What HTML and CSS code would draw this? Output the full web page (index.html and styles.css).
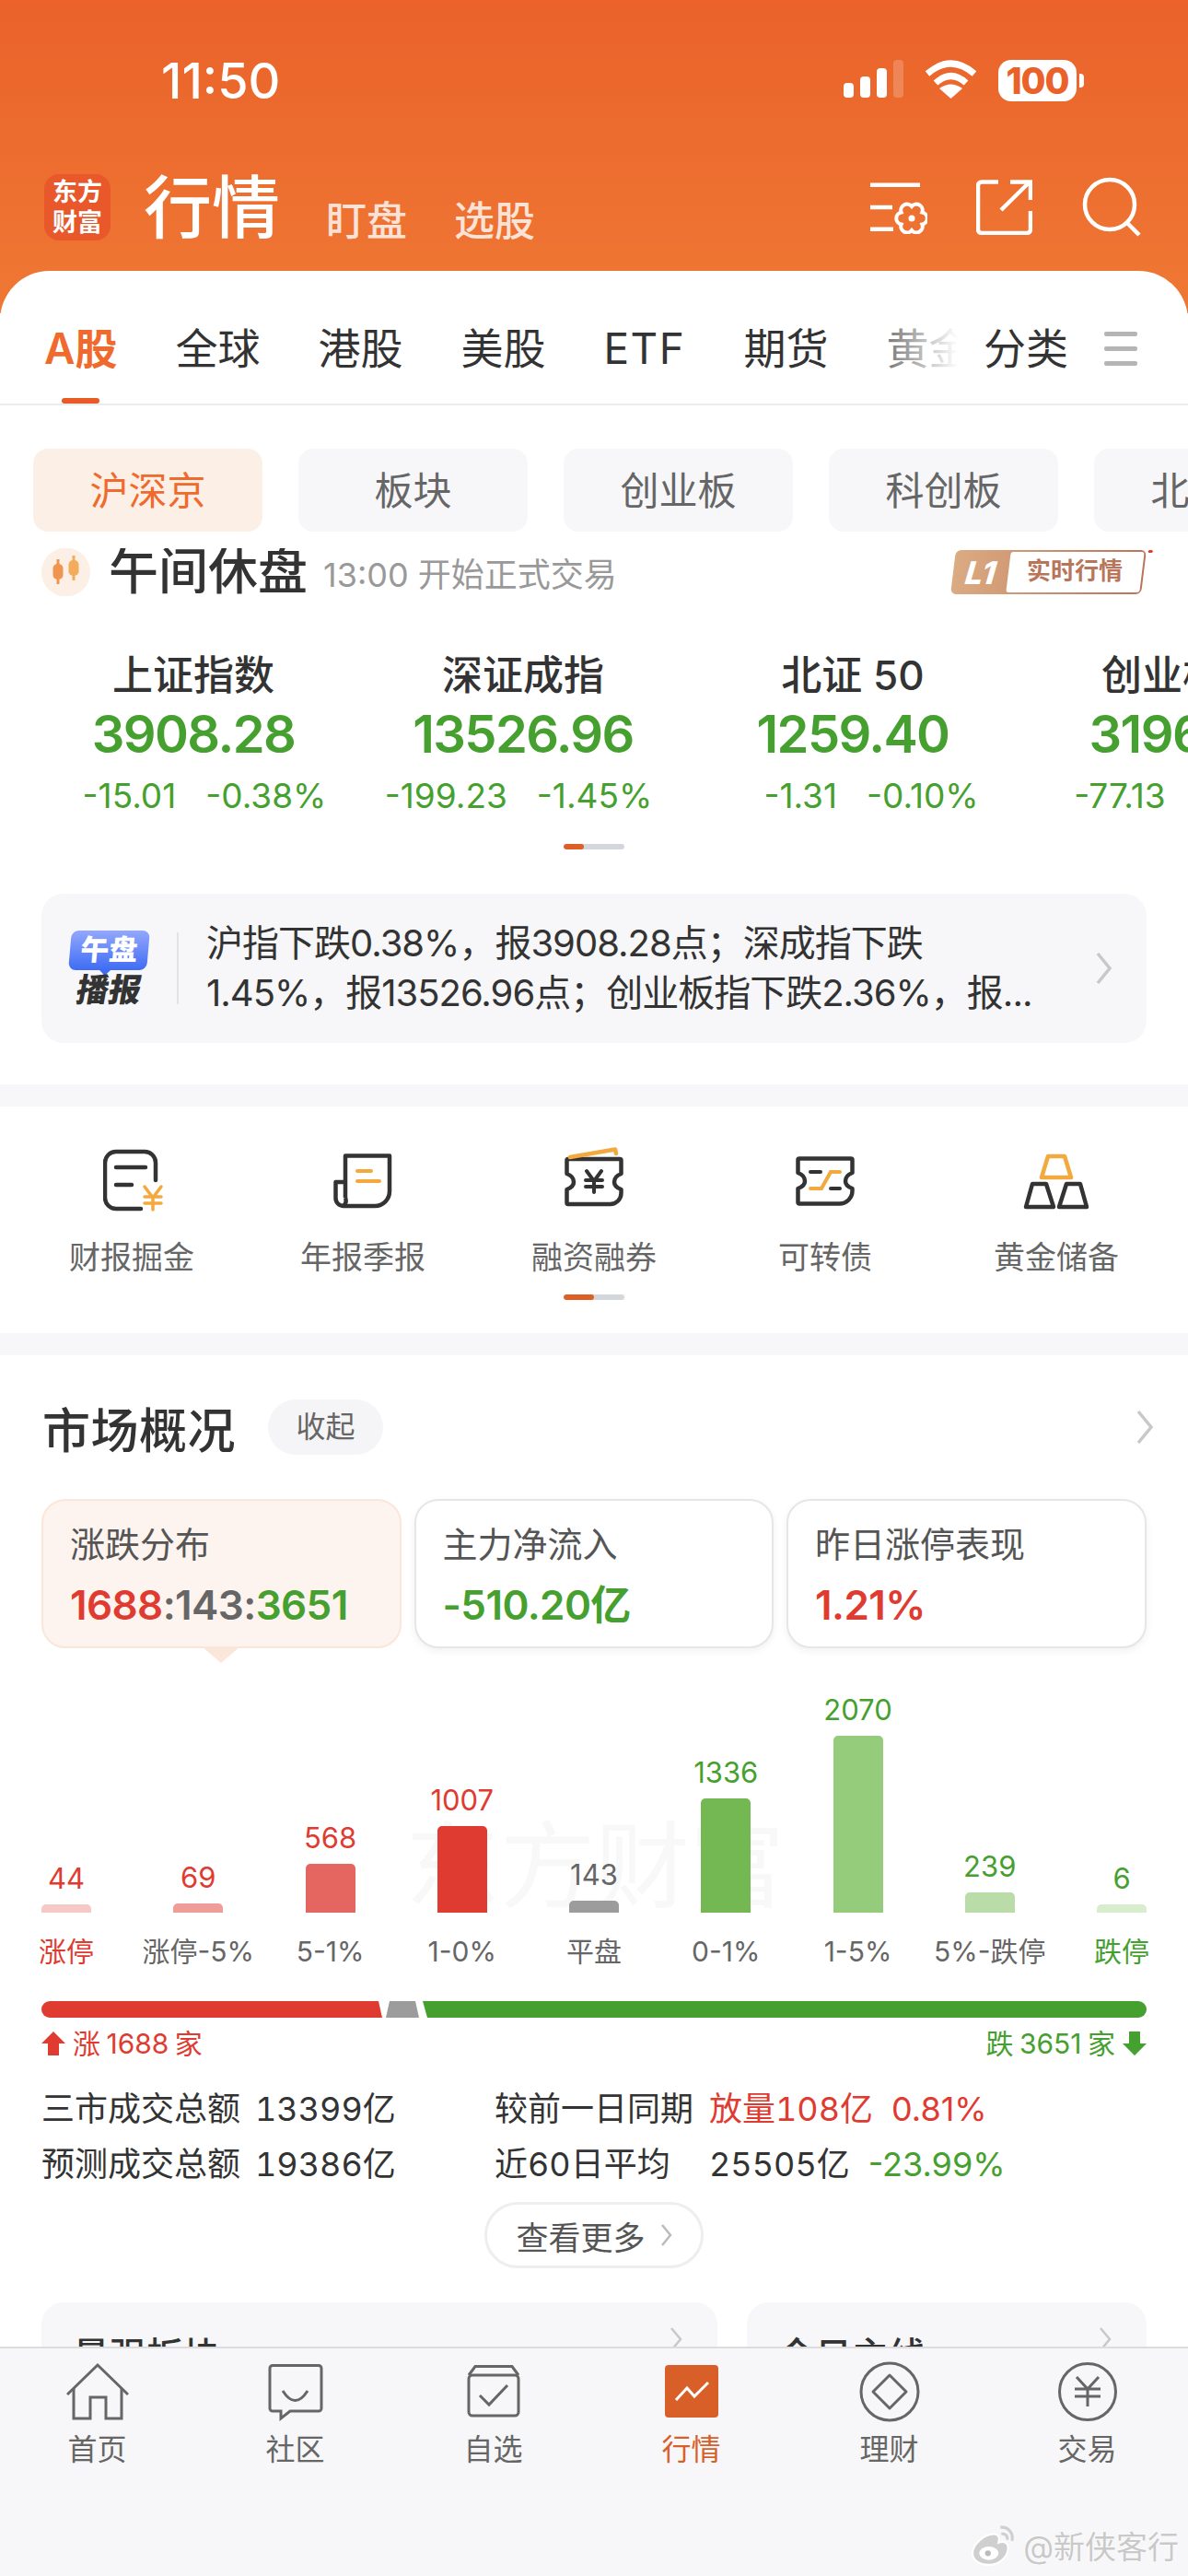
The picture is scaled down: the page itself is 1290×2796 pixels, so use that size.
FILE: index.html
```html
<!DOCTYPE html>
<html lang="zh-CN">
<head>
  <meta charset="UTF-8">
  <meta name="viewport" content="width=device-width, initial-scale=1.0">
  <title>行情</title>
  <link rel="stylesheet" href="styles.css">
</head>
<body>
  <div class="screen">
    <div class="statusbar">
      <span class="time">11:50</span>
      <div class="status-icons">
        <svg width="65" height="41" viewBox="0 0 65 41" fill="#fff">
          <rect x="0" y="25" width="11" height="16" rx="4"/>
          <rect x="18" y="18" width="11" height="23" rx="4"/>
          <rect x="36" y="9" width="11" height="32" rx="4"/>
          <rect x="54" y="0" width="11" height="41" rx="4" opacity=".2"/>
        </svg>
        <svg class="wifi" width="57" height="42" viewBox="0 0 57 42" fill="none" stroke="#fff" stroke-width="7">
          <path d="M3 15 Q28.5 -7 54 15"/>
          <path d="M12 25 Q28.5 10 45 25"/>
          <path d="M28.5 42 L16 31 Q28.5 22 41 31 Z" fill="#fff" stroke="none"/>
        </svg>
        <div class="battery">100</div>
      </div>
    </div>

    <div class="appbar">
      <div class="logo">东方<br>财富</div>
      <div class="appbar-title">行情</div>
      <div class="appbar-sub">盯盘</div>
      <div class="appbar-sub">选股</div>
      <div class="appbar-icons">
        <svg width="62" height="56" viewBox="0 0 62 56" fill="none" stroke="#fff" stroke-width="4.5">
          <path d="M0 2.7H54M0 27H24M0 50.7H25"/>
          <path stroke-width="4" d="M56.3 45.5A6.6 6.6 0 0 1 45 52A6.6 6.6 0 0 1 33.7 45.5A6.6 6.6 0 0 1 33.7 32.5A6.6 6.6 0 0 1 45 26A6.6 6.6 0 0 1 56.3 32.5A6.6 6.6 0 0 1 56.3 45.5Z"/>
          <circle cx="45" cy="39" r="3.5" fill="#fff" stroke="none"/>
        </svg>
        <svg width="61" height="60" viewBox="0 0 61 60" fill="none" stroke="#fff" stroke-width="4.5">
          <path d="M24 2.5H6a4 4 0 0 0-4 4V54a4 4 0 0 0 4 4H55a4 4 0 0 0 4-4V34"/>
          <path d="M27 33L58 2.5M37 2.5H59V22"/>
        </svg>
        <svg width="66" height="66" viewBox="0 0 66 66" fill="none" stroke="#fff" stroke-width="4.5">
          <circle cx="30" cy="30" r="27"/>
          <path d="M49 50L62 63"/>
        </svg>
      </div>
    </div>

    <div class="sheet">
      <div class="tabs">
        <div class="tabs-scroll">
          <div class="tab active">A股</div>
          <div class="tab">全球</div>
          <div class="tab">港股</div>
          <div class="tab">美股</div>
          <div class="tab tab-etf">ETF</div>
          <div class="tab">期货</div>
          <div class="tab">黄金</div>
        </div>
        <div class="tab tab-class">分类</div>
        <div class="tab-menu"><i></i><i></i><i></i></div>
      </div>

      <div class="pills">
        <div class="pill active">沪深京</div>
        <div class="pill">板块</div>
        <div class="pill">创业板</div>
        <div class="pill">科创板</div>
        <div class="pill">北交所</div>
      </div>

      <div class="session">
        <svg width="53" height="52" viewBox="0 0 53 52">
          <circle cx="26.5" cy="26" r="26.5" fill="#fcefe6"/>
          <path d="M18 12V39" stroke="#ef9550" stroke-width="3"/>
          <rect x="12.500" y="17" width="11" height="17" rx="5" fill="#ef9550"/>
          <path d="M35 8V35" stroke="#f3ab5c" stroke-width="3"/>
          <rect x="29.500" y="13" width="11" height="17" rx="5" fill="#f3ab5c"/>
        </svg>
        <span class="session-title">午间休盘</span>
        <span class="session-note">13:00 开始正式交易</span>
        <div class="l1">
          <span class="l1-mark">L1</span>
          <span class="l1-tag"><span>实时行情</span></span>
          <i class="l1-dot"></i>
        </div>
      </div>

      <div class="indexes">
        <div class="index">
          <div class="index-name">上证指数</div>
          <div class="index-value">3908.28</div>
          <div class="index-chg chg-a"><span>-15.01</span><span>-0.38%</span></div>
        </div>
        <div class="index">
          <div class="index-name">深证成指</div>
          <div class="index-value">13526.96</div>
          <div class="index-chg chg-b"><span>-199.23</span><span>-1.45%</span></div>
        </div>
        <div class="index">
          <div class="index-name">北证 50</div>
          <div class="index-value">1259.40</div>
          <div class="index-chg chg-c"><span>-1.31</span><span>-0.10%</span></div>
        </div>
        <div class="index">
          <div class="index-name">创业板指</div>
          <div class="index-value">3196.57</div>
          <div class="index-chg chg-d"><span>-77.13</span><span>-2.36%</span></div>
        </div>
      </div>
      <div class="dots dots-index"><i style="width:22px"></i></div>

      <div class="brief">
        <div class="brief-logo">
          <div class="brief-badge">午盘</div>
          <div class="brief-word">播报</div>
        </div>
        <div class="brief-text">沪指下跌0.38%，报3908.28点；深成指下跌<br>1.45%，报13526.96点；创业板指下跌2.36%，报...</div>
        <svg class="brief-arrow" width="20" height="36" viewBox="0 0 20 36" fill="none" stroke="#c8c8c8" stroke-width="3.500"><path d="M3 2L16 18L3 34"/></svg>
      </div>

      <div class="band"></div>

      <div class="tools">
        <div class="tool tool-first">
          <svg width="66" height="68" viewBox="0 0 66 68" fill="none" stroke="#333" stroke-width="4.500" stroke-linecap="round">
            <path d="M57 33V14a12 12 0 0 0-12-12H14a12 12 0 0 0-12 12V52a12 12 0 0 0 12 12H41"/>
            <path d="M14 19H46M14 38H31"/>
            <path stroke="#f3a93e" stroke-width="3.500" d="M45 40L54 52L63 40M45 51H63M45 58H63M54 51V65"/>
          </svg>
          <span>财报掘金</span>
        </div>
        <div class="tool">
          <svg width="64" height="60" viewBox="0 0 64 60" fill="none" stroke="#333" stroke-width="4.500" stroke-linejoin="round">
            <path d="M13 48V2.500H61V41a16 16 0 0 1-16 16H11a8.500 8.500 0 0 1-8.500-8.500V31H13"/>
            <path d="M11 57a8 8 0 0 0 2-9"/>
            <path stroke="#f3a93e" stroke-width="4" stroke-linecap="round" d="M26 19H41M26 30H50"/>
          </svg>
          <span>年报季报</span>
        </div>
        <div class="tool">
          <svg width="64" height="74" viewBox="0 -1 64 74" fill="none" stroke="#333" stroke-width="4.500" stroke-linejoin="round">
            <path d="M4 12H60a1.500 1.500 0 0 1 1.500 1.500V28C56 30 54 33 54 37C54 40 56 43 61.500 45V49a12 12 0 0 1-12 12H4a1.500 1.500 0 0 1-1.500-1.500V45C8 43 10 40 10 37C10 33 8 30 2.500 28V13.500A1.500 1.500 0 0 1 4 12Z"/>
            <path stroke="#f3a93e" stroke-linecap="round" d="M6 10L55 1.500L56 6"/>
            <path stroke-width="4" stroke-linecap="round" d="M24 25L32 36L40 25M23 35H41M23 42H41M32 35V48"/>
          </svg>
          <span>融资融券</span>
        </div>
        <div class="tool">
          <svg width="64" height="54" viewBox="0 0 64 54" fill="none" stroke="#333" stroke-width="4.500" stroke-linejoin="round">
            <path d="M4 2.500H60a1.500 1.500 0 0 1 1.500 1.500V18C56 20 54 23 54 27C54 30 56 33 61.500 35V37a14 14 0 0 1-14 14.500H4a1.500 1.500 0 0 1-1.500-1.500V35C8 33 10 30 10 27C10 23 8 20 2.500 18V4A1.500 1.500 0 0 1 4 2.500Z"/>
            <path stroke-width="4" stroke-linecap="round" d="M16 17H27M38 35H48"/>
            <path stroke="#f3a93e" stroke-width="4" stroke-linecap="round" stroke-linejoin="miter" d="M16 35H28L38 17H48"/>
          </svg>
          <span>可转债</span>
        </div>
        <div class="tool">
          <svg width="72" height="60" viewBox="0 0 72 60" fill="none" stroke="#333" stroke-width="4.500" stroke-linejoin="round">
            <path stroke="#f3a93e" d="M27 3H45L52 26H20Z"/>
            <path d="M10 33H25L33 58H3Z"/>
            <path d="M47 33H62L69 58H39Z"/>
          </svg>
          <span>黄金储备</span>
        </div>
      </div>
      <div class="dots dots-tool"><i style="width:33px"></i></div>

      <div class="band band-tool"></div>

      <div class="market">
        <div class="market-head">
          <span class="market-title">市场概况</span>
          <span class="market-fold">收起</span>
          <svg class="market-arrow" width="20" height="38" viewBox="0 0 20 38" fill="none" stroke="#c8c8c8" stroke-width="3.500"><path d="M3 2L17 19L3 36"/></svg>
        </div>

        <div class="cards">
          <div class="card active">
            <div class="card-label">涨跌分布</div>
            <div class="card-value"><span class="up">1688</span><span class="flat">:143:</span><span class="down">3651</span></div>
          </div>
          <div class="card">
            <div class="card-label">主力净流入</div>
            <div class="card-value down">-510.20亿</div>
          </div>
          <div class="card">
            <div class="card-label">昨日涨停表现</div>
            <div class="card-value up">1.21%</div>
          </div>
        </div>

        <div class="chart">
          <div class="chart-mark">东方财富</div>
          <div class="col"><span class="col-num up">44</span><i class="bar" style="height:9px;background:#f6c9c6"></i><span class="col-label up">涨停</span></div>
          <div class="col"><span class="col-num up">69</span><i class="bar" style="height:10px;background:#ee9d98"></i><span class="col-label">涨停-5%</span></div>
          <div class="col"><span class="col-num up">568</span><i class="bar" style="height:53px;background:#e56660"></i><span class="col-label">5-1%</span></div>
          <div class="col"><span class="col-num up">1007</span><i class="bar" style="height:94px;background:#e03b31"></i><span class="col-label">1-0%</span></div>
          <div class="col"><span class="col-num flat">143</span><i class="bar" style="height:13px;background:#9c9c9c"></i><span class="col-label">平盘</span></div>
          <div class="col"><span class="col-num down">1336</span><i class="bar" style="height:124px;background:#74b854"></i><span class="col-label">0-1%</span></div>
          <div class="col"><span class="col-num down">2070</span><i class="bar" style="height:192px;background:#95cc7c"></i><span class="col-label">1-5%</span></div>
          <div class="col"><span class="col-num down">239</span><i class="bar" style="height:22px;background:#b9dca8"></i><span class="col-label">5%-跌停</span></div>
          <div class="col"><span class="col-num down">6</span><i class="bar" style="height:9px;background:#d8ecce"></i><span class="col-label down">跌停</span></div>
        </div>

        <div class="split">
          <i class="split-up"></i>
          <i class="split-flat"></i>
          <i class="split-down"></i>
        </div>
        <div class="split-legend">
          <span class="up legend-item">
            <svg width="26" height="26" viewBox="0 0 26 26" fill="#e03b31"><path d="M13 0L26 13H19V26H7V13H0Z"/></svg>
            涨 1688 家
          </span>
          <span class="down legend-item">
            跌 3651 家
            <svg width="26" height="26" viewBox="0 0 26 26" fill="#46a02f"><path d="M13 26L26 13H19V0H7V13H0Z"/></svg>
          </span>
        </div>

        <div class="stats">
          <span>三市成交总额</span><span>13399亿</span><span>较前一日同期</span>
          <span class="up stat-pair"><span>放量108亿</span><span>0.81%</span></span>
          <span>预测成交总额</span><span>19386亿</span><span>近60日平均</span>
          <span class="stat-pair"><span>25505亿</span><span class="down">-23.99%</span></span>
        </div>

        <div class="more">
          查看更多
          <svg width="13" height="26" viewBox="0 0 13 26" fill="none" stroke="#bbb" stroke-width="2.500"><path d="M2 2L11 13L2 24"/></svg>
        </div>

        <div class="lower">
          <div class="lower-card lower-wide">
            <span>最强板块</span>
            <svg width="14" height="28" viewBox="0 0 14 28" fill="none" stroke="#c8c8c8" stroke-width="2.500"><path d="M2 2L12 14L2 26"/></svg>
          </div>
          <div class="lower-card">
            <span>今日主线</span>
            <svg width="14" height="28" viewBox="0 0 14 28" fill="none" stroke="#c8c8c8" stroke-width="2.500"><path d="M2 2L12 14L2 26"/></svg>
          </div>
        </div>
      </div>
    </div>

    <div class="tabbar">
      <div class="nav-item">
        <svg width="68" height="66" viewBox="0 -3 68 66" fill="none" stroke="#666" stroke-width="3">
          <path d="M1 33L34 1L67 33" stroke-linejoin="miter"/>
          <path d="M8 26V59H26V36H43V59H60V26"/>
        </svg>
        <span>首页</span>
      </div>
      <div class="nav-item">
        <svg width="60" height="66" viewBox="0 -3 60 66" fill="none" stroke="#666" stroke-width="3">
          <path d="M5 1.500H55a3 3 0 0 1 3 3V48a3 3 0 0 1-3 3H24L14 59V51H5a3 3 0 0 1-3-3V4.500a3 3 0 0 1 3-3Z"/>
          <path d="M16 29Q29.500 50 43 29"/>
        </svg>
        <span>社区</span>
      </div>
      <div class="nav-item">
        <svg width="58" height="66" viewBox="0 -4 58 66" fill="none" stroke="#666" stroke-width="3">
          <path d="M2 11L9 1.500H49L56 11"/>
          <rect x="2" y="11" width="54" height="44" rx="4"/>
          <path d="M14 33L24 43L44 22"/>
        </svg>
        <span>自选</span>
      </div>
      <div class="nav-item active">
        <svg width="58" height="66" viewBox="0 -4 58 66">
          <rect x="0" y="0" width="58" height="57" rx="4" fill="#d85f28"/>
          <path d="M12 38L24 25L32 34L47 19" fill="none" stroke="#fff" stroke-width="3"/>
        </svg>
        <span>行情</span>
      </div>
      <div class="nav-item">
        <svg width="66" height="66" viewBox="0 0 66 66" fill="none" stroke="#666" stroke-width="3">
          <circle cx="33" cy="33" r="31"/>
          <path d="M33 15L51 33L33 51L15 33Z" stroke-linejoin="round"/>
        </svg>
        <span>理财</span>
      </div>
      <div class="nav-item">
        <svg width="66" height="66" viewBox="0 0 66 66" fill="none" stroke="#666" stroke-width="3">
          <circle cx="33" cy="33" r="30.500"/>
          <path d="M21 17L33 30L45 17M19 30H47M19 38H47M33 30V49"/>
        </svg>
        <span>交易</span>
      </div>
    </div>

    <div class="watermark">
      <svg width="48" height="46" viewBox="0 0 46 44">
        <path d="M18 42C8 42 1 37 1 30C1 21 13 10 23 10C28 10 30 14 28 19C34 17 38 19 38 24C38 34 29 42 18 42Z" fill="#cfcfcf" stroke="#fff" stroke-width="2"/>
        <ellipse cx="18" cy="30" rx="10" ry="7" fill="#fff"/>
        <circle cx="17" cy="30" r="3" fill="#bbb"/>
        <path d="M30 3C38 2 44 9 42 17M31 10C35 9 38 12 37 16" fill="none" stroke="#cfcfcf" stroke-width="3"/>
      </svg>
      <span>@新侠客行</span>
    </div>
  </div>
</body>
</html>
```

FILE: styles.css
```css
* {
  box-sizing: border-box;
}
html, body {
  margin: 0;
  padding: 0;
}
body {
  font-family: Inter, "Noto Sans CJK SC", sans-serif;
  color: #333;
}
.screen {
  position: relative;
  width: 1290px;
  height: 2796px;
  overflow: hidden;
  background: linear-gradient(#ea622a 0, #ef7834 340px, #fff 340px) no-repeat;
}
i {
  display: block;
}
svg {
  display: block;
  flex-shrink: 0;
}

/* status bar */
.statusbar {
  height: 174px;
  display: flex;
  align-items: center;
  justify-content: space-between;
  padding: 0 113px 0 175px;
  color: #fff;
}
.time {
  font-size: 54px;
  font-weight: 500;
}
.status-icons {
  display: flex;
  align-items: flex-start;
  gap: 23px;
}
.battery {
  position: relative;
  width: 85px;
  height: 45px;
  margin-right: 8px;
  background: #fff;
  border-radius: 14px;
  color: #ea622a;
  font-size: 39px;
  font-weight: 800;
  line-height: 45px;
  text-align: center;
  letter-spacing: -1px;
}
.battery::after {
  content: "";
  position: absolute;
  right: -8px;
  top: 15px;
  width: 5px;
  height: 15px;
  background: #fff;
  border-radius: 0 4px 4px 0;
}

/* app bar */
.appbar {
  height: 120px;
  display: flex;
  align-items: flex-start;
  padding: 15px 49px 0 48px;
  color: #fff;
}
.logo {
  width: 72px;
  height: 72px;
  background: #e8582a;
  border-radius: 16px;
  font-size: 27px;
  font-weight: 700;
  line-height: 33px;
  padding-top: 3px;
  text-align: center;
}
.appbar-title {
  margin-left: 36px;
  font-size: 74px;
  font-weight: 500;
  line-height: 72px;
}
.appbar-sub {
  margin: 29px 0 0 51px;
  font-size: 44px;
  font-weight: 500;
  line-height: 44px;
  opacity: .8;
}
.appbar-title + .appbar-sub {
  margin-left: 50px;
}
.appbar-icons {
  margin-left: auto;
  display: flex;
  align-items: flex-start;
  gap: 53px;
}
.appbar-icons svg:nth-child(1) {
  margin-top: 9px;
}
.appbar-icons svg:nth-child(2) {
  margin-top: 6px;
}
.appbar-icons svg:nth-child(3) {
  margin: 3px 0 0 1px;
}

/* sheet */
.sheet {
  background: #fff;
  border-radius: 54px 54px 0 0;
  height: 2502px;
}
.tabs {
  height: 146px;
  display: flex;
  align-items: flex-start;
  padding: 56px 54px 0 48px;
  border-bottom: 2px solid #ececec;
}
.tabs-scroll {
  position: relative;
  width: 992px;
  height: 88px;
  display: flex;
  gap: 63px;
  overflow: hidden;
}
.tabs-scroll::after {
  content: "";
  position: absolute;
  right: 0;
  top: 0;
  width: 76px;
  height: 60px;
  background: linear-gradient(90deg, rgba(255, 255, 255, .35), #fff);
}
.tab {
  flex-shrink: 0;
  font-size: 46px;
  line-height: 56px;
  color: #333;
}
.tab-etf {
  letter-spacing: 1.5px;
}
.tab.active {
  color: #ef6a2c;
  font-weight: 600;
}
.tab.active::after {
  content: "";
  display: block;
  width: 41px;
  height: 6px;
  margin: 26px auto 0;
  background: #e85a26;
  border-radius: 3px;
}
.tab-class {
  margin-left: 28px;
}
.tab-menu {
  margin: 10px 0 0 39px;
  width: 36px;
  display: flex;
  flex-direction: column;
  gap: 11px;
}
.tab-menu i {
  height: 5px;
  background: #b5b5b5;
  border-radius: 2px;
}

/* pills */
.pills {
  display: flex;
  gap: 39px;
  margin-top: 47px;
  padding-left: 36px;
  overflow: hidden;
}
.pill {
  flex: 0 0 249px;
  height: 90px;
  background: #f7f7f9;
  border-radius: 16px;
  font-size: 42px;
  line-height: 92px;
  text-align: center;
  color: #666;
}
.pill.active {
  background: #fcefe6;
  color: #ef6a2c;
}

/* session row */
.session {
  height: 52px;
  margin-top: 18px;
  padding: 0 45px;
  display: flex;
  align-items: center;
  overflow: hidden;
}
.session-title {
  margin-left: 20px;
  font-size: 54px;
  font-weight: 500;
  line-height: 52px;
}
.session-note {
  margin-left: 17px;
  font-size: 36px;
  color: #999;
}
.l1 {
  position: relative;
  margin: 0 3px 0 auto;
  width: 207px;
  height: 48px;
  display: flex;
  align-items: center;
  background: linear-gradient(90deg, #dbab82, #b9745a);
  border-radius: 6px;
  transform: skewX(-7deg);
}
.l1-mark {
  width: 60px;
  text-align: center;
  color: #fff;
  font-size: 34px;
  font-weight: 800;
  font-style: italic;
}
.l1-tag {
  flex: 1;
  height: 44px;
  margin-right: 2px;
  background: #fff;
  border-radius: 3px;
  text-align: center;
  color: #b8755a;
  font-size: 26px;
  font-weight: 700;
  line-height: 42px;
}
.l1-tag span {
  display: inline-block;
  transform: skewX(7deg);
}
.l1-dot {
  position: absolute;
  right: -7px;
  top: 0;
  width: 5px;
  height: 3px;
  background: #e03b31;
  border-radius: 2px;
}

/* index carousel */
.indexes {
  display: flex;
  margin-top: 58px;
  padding-left: 31px;
  overflow: hidden;
}
.index {
  flex: 0 0 358px;
  text-align: center;
}
.index-name {
  font-size: 44px;
  font-weight: 500;
  line-height: 56px;
}
.index-value {
  margin-top: 4px;
  font-size: 56px;
  font-weight: 600;
  line-height: 64px;
  letter-spacing: -1.6px;
  color: #46a02f;
}
.index-chg {
  margin-top: 13px;
  font-size: 37px;
  line-height: 44px;
  color: #46a02f;
  display: flex;
  justify-content: center;
  gap: 32px;
  white-space: nowrap;
}
.chg-a {
  padding-left: 24px;
}
.chg-b {
  padding-right: 10px;
}
.chg-c {
  padding-left: 40px;
}
.chg-d {
  padding-left: 26px;
}
.dots {
  width: 66px;
  height: 6px;
  margin: 0 auto;
  background: #d3d6dc;
  border-radius: 3px;
  overflow: hidden;
}
.dots i {
  height: 6px;
  background: #dd5f26;
  border-radius: 3px;
}
.dots-index {
  margin-top: 30px;
}
.dots-tool {
  margin-top: 17px;
}

/* midday brief */
.brief {
  height: 162px;
  margin: 48px 45px 0;
  padding: 0 36px 0 31px;
  display: flex;
  align-items: center;
  background: #f7f7f9;
  border-radius: 24px;
}
.brief-logo {
  width: 85px;
  height: 82px;
  text-align: center;
}
.brief-badge {
  position: relative;
  height: 43px;
  background: linear-gradient(#93a8fb, #3f6cf5);
  border-radius: 8px;
  color: #fff;
  font-size: 31px;
  font-weight: 900;
  line-height: 42px;
  transform: skewX(-5deg);
}
.brief-badge::after {
  content: "";
  position: absolute;
  left: 34px;
  top: 100%;
  border: 6px solid transparent;
  border-top-color: #3f6cf5;
}
.brief-word {
  margin-top: 3px;
  color: #333;
  font-size: 35px;
  font-weight: 900;
  line-height: 36px;
  transform: skewX(-10deg);
}
.brief-text {
  margin-left: 31px;
  padding-left: 30px;
  border-left: 2px solid #e3e3e6;
  font-size: 40px;
  line-height: 54px;
  letter-spacing: -1px;
  white-space: nowrap;
  color: #333;
  height: 78px;
  display: flex;
  align-items: center;
}
.brief-arrow {
  margin-left: auto;
}

.band {
  height: 24px;
  margin-top: 45px;
  background: #f7f7f9;
}
.band-tool {
  margin-top: 36px;
}

/* tool grid */
.tools {
  display: flex;
  padding-top: 44px;
  justify-content: center;
}
.tool {
  flex: 0 0 251px;
  display: flex;
  flex-direction: column;
  align-items: center;
  font-size: 34px;
  line-height: 46px;
  color: #666;
}
.tool svg {
  height: 74px;
}
.tool-first svg {
  margin-left: 4px;
}
.tool span {
  margin-top: 23px;
}

/* market overview */
.market {
  padding: 48px 45px 0;
}
.market-head {
  height: 60px;
  display: flex;
  align-items: center;
}
.market-title {
  font-size: 52px;
  font-weight: 500;
  margin-left: 1px;
  letter-spacing: .5px;
}
.market-fold {
  margin-left: 35px;
  width: 125px;
  height: 60px;
  background: #f5f5f7;
  border-radius: 30px;
  font-size: 32px;
  line-height: 60px;
  text-align: center;
  color: #666;
}
.market-arrow {
  margin-left: auto;
  margin-right: -8px;
}
.cards {
  display: flex;
  gap: 14px;
  margin-top: 48px;
}
.card {
  position: relative;
  flex: 0 0 390.500px;
  height: 162px;
  padding: 23px 29px 0;
  background: #fff;
  border: 2px solid #e6e6e6;
  border-radius: 26px;
  box-shadow: 0 3px 8px rgba(0, 0, 0, .06);
}
.card.active {
  background: #fdf3ef;
  border-color: #fbe6da;
  box-shadow: none;
}
.card.active::after {
  content: "";
  position: absolute;
  left: 172px;
  top: 100%;
  width: 42px;
  height: 18px;
  background: #fbe6da;
  clip-path: polygon(0 0, 100% 0, 50% 100%);
}
.card-label {
  font-size: 38px;
  line-height: 48px;
  color: #555;
}
.card-value {
  margin-top: 14px;
  font-size: 44px;
  font-weight: 600;
  line-height: 56px;
  letter-spacing: -.6px;
  white-space: nowrap;
}
.up {
  color: #e03b31;
}
.down {
  color: #46a02f;
}
.flat {
  color: #666;
}

/* bar chart */
.chart {
  position: relative;
  display: flex;
  justify-content: space-between;
  align-items: flex-end;
  margin-top: 47px;
}
.chart-mark {
  position: absolute;
  left: 395px;
  bottom: 60px;
  font-size: 103px;
  line-height: 104px;
  color: #f8f8f8;
  white-space: nowrap;
}
.col {
  position: relative;
  width: 54px;
  display: flex;
  flex-direction: column;
  align-items: center;
}
.col-num {
  font-size: 31px;
  line-height: 40px;
  margin-bottom: 8px;
}
.bar {
  width: 54px;
  border-radius: 5px 5px 0 0;
}
.col-label {
  margin-top: 22px;
  font-size: 30px;
  line-height: 40px;
  white-space: nowrap;
  color: #666;
}
.col-label.up {
  color: #e03b31;
}
.col-label.down {
  color: #46a02f;
}

/* split bar */
.split {
  display: flex;
  gap: 4px;
  height: 18px;
  margin-top: 34px;
  border-radius: 9px;
  overflow: hidden;
}
.split-up {
  flex: 0 0 370px;
  background: #e03b31;
  clip-path: polygon(0 0, calc(100% - 4px) 0, 100% 100%, 0 100%);
}
.split-flat {
  flex: 0 0 36px;
  background: #9c9c9c;
  clip-path: polygon(4px 0, calc(100% - 4px) 0, 100% 100%, 0 100%);
}
.split-down {
  flex: 1;
  background: #46a02f;
  clip-path: polygon(0 0, 100% 0, 100% 100%, 5px 100%);
}
.split-legend {
  display: flex;
  justify-content: space-between;
  margin-top: 10px;
  font-size: 30px;
  line-height: 36px;
  word-spacing: -2px;
}
.legend-item {
  display: flex;
  align-items: center;
  gap: 8px;
}
.stats {
  display: grid;
  grid-template-columns: 232px 260px 233px 1fr;
  margin-top: 23px;
  font-size: 36px;
  line-height: 60px;
  font-variant-numeric: tabular-nums;
  color: #333;
  white-space: nowrap;
}
.stat-pair {
  display: flex;
  gap: 20px;
}
.stat-pair span:last-child {
  font-variant-numeric: normal;
}
.more {
  width: 238px;
  height: 72px;
  margin: 11px auto 0;
  display: flex;
  align-items: center;
  justify-content: center;
  gap: 16px;
  border: 3px solid #eee;
  border-radius: 36px;
  font-size: 35px;
  color: #555;
}
.lower {
  display: flex;
  gap: 32px;
  margin-top: 37px;
}
.lower-card {
  flex: 0 0 434px;
  height: 160px;
  padding: 26px 38px 0 34px;
  display: flex;
  justify-content: space-between;
  align-items: flex-start;
  background: #f7f7f9;
  border-radius: 24px;
  font-size: 40px;
  font-weight: 500;
}
.lower-wide {
  flex-basis: 734px;
}

/* bottom tab bar */
.tabbar {
  position: absolute;
  left: 0;
  right: 0;
  top: 2547px;
  bottom: 0;
  display: flex;
  padding-top: 14px;
  background: #f7f7f9;
  border-top: 2px solid #dcdcdc;
}
.nav-item {
  flex: 0 0 215px;
  height: 120px;
  display: flex;
  flex-direction: column;
  align-items: center;
  font-size: 32px;
  line-height: 40px;
  color: #666;
}
.nav-item:first-child {
  margin-left: -2px;
}
.nav-item span {
  margin-top: 10px;
}
.nav-item.active {
  color: #d85f28;
}
.watermark {
  position: absolute;
  right: 10px;
  bottom: 9px;
  display: flex;
  align-items: center;
  gap: 8px;
  font-size: 34px;
  color: #c9c9c9;
  text-shadow: 0 0 2px #fff, 0 0 2px #fff;
}
```
